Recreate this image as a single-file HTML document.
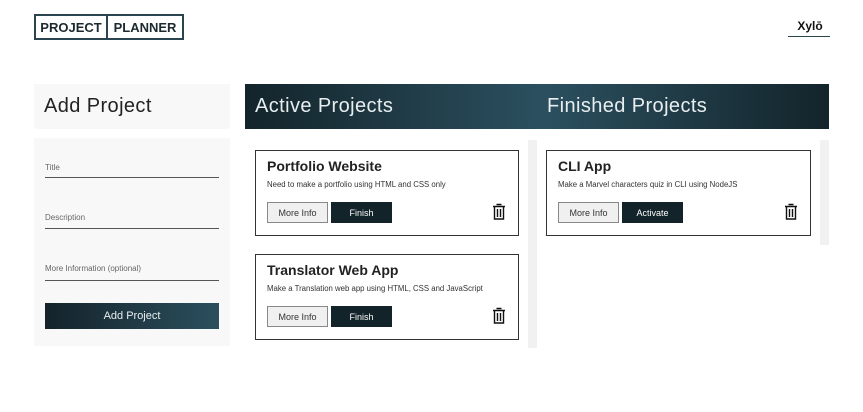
<!DOCTYPE html>
<html><head><style>
*{box-sizing:border-box;margin:0;padding:0}
body{width:863px;height:412px;background:#fff;font-family:"Liberation Sans",sans-serif;position:relative;overflow:hidden;color:#222}
.abs{position:absolute}
.logo{left:34px;top:14px;width:150px;height:26px;border:2px solid #2b4550;display:flex;font-size:13px;font-weight:bold;color:#1c2a30}
.logo span{display:flex;align-items:center;justify-content:center;height:100%}
.logo span:first-child{border-right:2px solid #2b4550;width:72px}
.logo span:last-child{flex:1}
.hdr{top:84px;height:45px;color:#e8eef0;font-size:20px;padding:11px 0 0 10px;letter-spacing:0.4px}
.panel{background:#f8f8f8}
.lbl{left:45px;font-size:8px;color:#666}
.line{left:45px;width:174px;height:1px;background:#555}
.card{border:1.5px solid #333;background:#fff;padding:0 0 0 11px}
.card h3{font-size:14px;font-weight:bold;margin-top:7px;color:#222}
.card p{font-size:7.8px;color:#333;margin-top:6px}
.btns{position:absolute;left:11px;top:51px;display:flex;gap:3px}
.b1{width:61px;height:21px;border:1.5px solid #888;background:#f0f0f0;font-size:9px;display:flex;align-items:center;justify-content:center;color:#333}
.b2{width:61px;height:21px;background:#12232a;color:#fff;font-size:9px;display:flex;align-items:center;justify-content:center}
.trash{position:absolute;right:12px;top:52px}
.sb{background:#f1f1f1;width:9px}
</style></head><body>
<div class="abs logo"><span>PROJECT</span><span>PLANNER</span></div>
<div class="abs" style="left:790px;top:19px;width:40px;text-align:center;font-size:12px;font-weight:bold;color:#111">Xylō</div>
<div class="abs" style="left:788px;top:36px;width:42px;height:1px;background:#2b4550"></div>

<div class="abs panel hdr" style="left:34px;width:196px;color:#222">Add Project</div>
<div class="abs panel" style="left:34px;top:138px;width:196px;height:208px"></div>
<div class="abs lbl" style="top:163px">Title</div><div class="abs line" style="top:177px"></div>
<div class="abs lbl" style="top:213px">Description</div><div class="abs line" style="top:228px"></div>
<div class="abs lbl" style="top:264px">More Information (optional)</div><div class="abs line" style="top:280px"></div>
<div class="abs" style="left:45px;top:303px;width:174px;height:26px;background:linear-gradient(90deg,#14232a,#2b4f5e);color:#e8eef0;font-size:11px;display:flex;align-items:center;justify-content:center">Add Project</div>

<div class="abs hdr" style="left:245px;width:584px;background:linear-gradient(90deg,#13242b 0%,#2b4f5e 50%,#2b4f5e 52%,#13242b 100%)">Active Projects<span style="position:absolute;left:302px;top:11px">Finished Projects</span></div>

<div class="abs sb" style="left:528px;top:140px;height:208px"></div>
<div class="abs sb" style="left:820px;top:140px;height:105px"></div>

<svg width="0" height="0" style="position:absolute"><defs><symbol id="t" viewBox="0 0 14 17"><path d="M4.5 1.5h5M1 3.5h12M2.5 3.5v12.5h9V3.5M5.5 6v8M8.5 6v8" fill="none" stroke="#111" stroke-width="1.4"/></symbol></defs></svg>

<div class="abs card" style="left:255px;top:150px;width:264px;height:86px"><h3>Portfolio Website</h3><p>Need to make a portfolio using HTML and CSS only</p>
<div class="btns"><div class="b1">More Info</div><div class="b2">Finish</div></div><svg class="trash" width="14" height="17"><use href="#t"/></svg></div>
<div class="abs card" style="left:255px;top:254px;width:264px;height:86px"><h3>Translator Web App</h3><p>Make a Translation web app using HTML, CSS and JavaScript</p>
<div class="btns"><div class="b1">More Info</div><div class="b2">Finish</div></div><svg class="trash" width="14" height="17"><use href="#t"/></svg></div>
<div class="abs card" style="left:546px;top:150px;width:265px;height:86px"><h3>CLI App</h3><p>Make a Marvel characters quiz in CLI using NodeJS</p>
<div class="btns"><div class="b1">More Info</div><div class="b2">Activate</div></div><svg class="trash" width="14" height="17"><use href="#t"/></svg></div>
</body></html>
